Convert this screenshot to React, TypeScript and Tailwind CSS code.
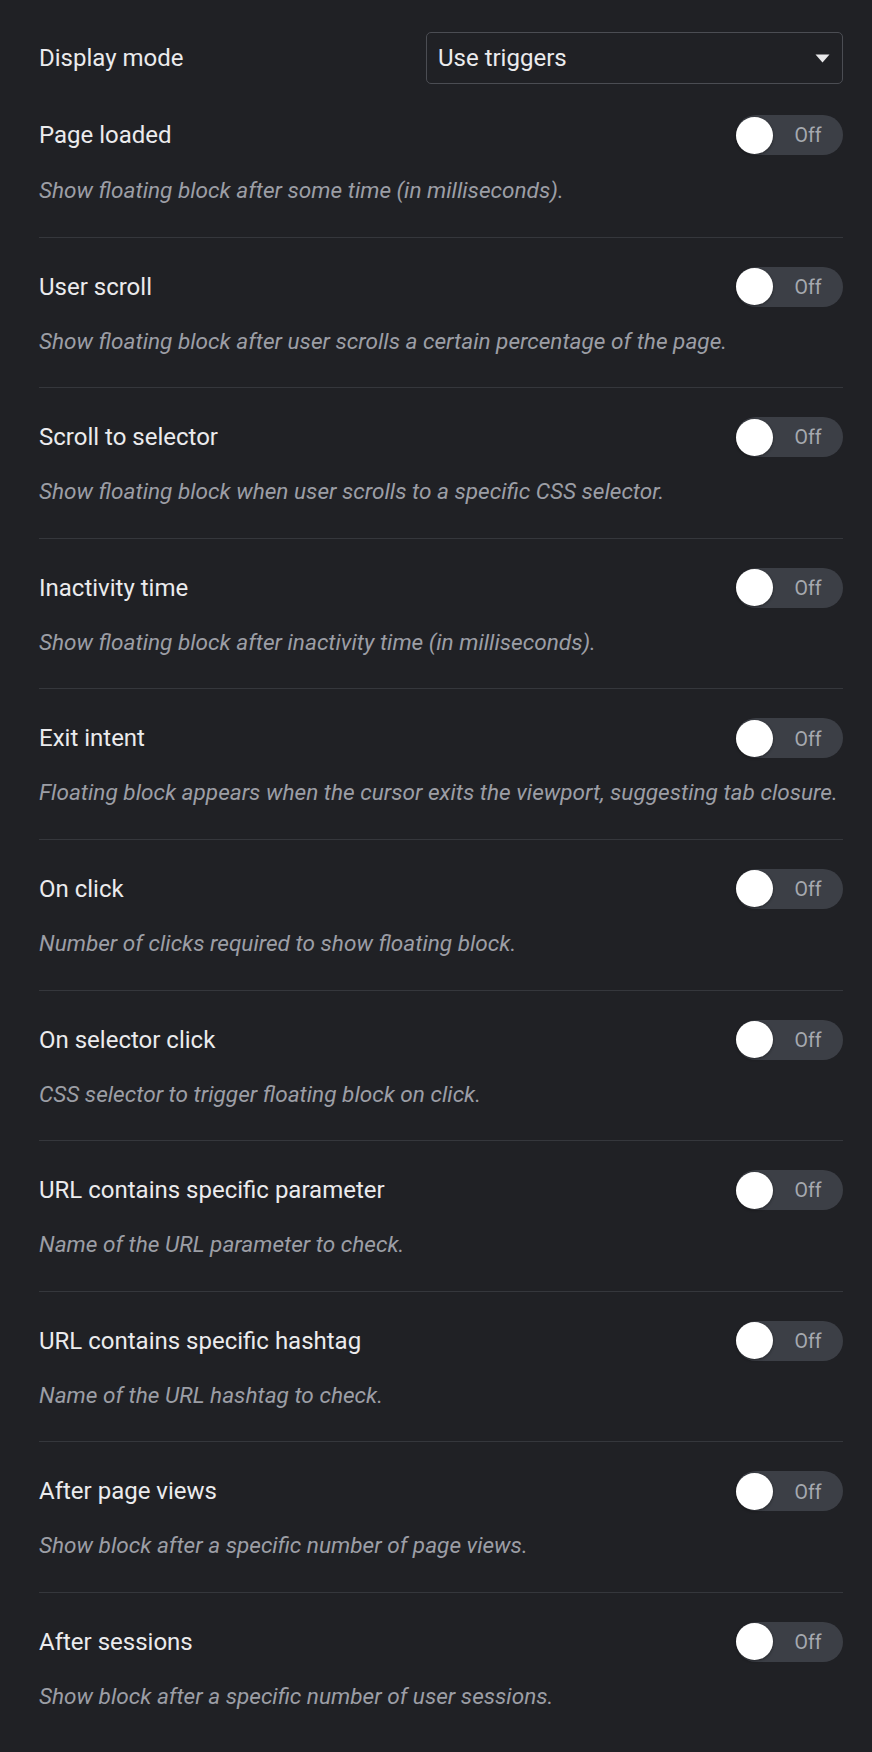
import React from "react";

const triggers: { label: string; desc: string }[] = [
  { label: "Page loaded", desc: "Show floating block after some time (in milliseconds)." },
  { label: "User scroll", desc: "Show floating block after user scrolls a certain percentage of the page." },
  { label: "Scroll to selector", desc: "Show floating block when user scrolls to a specific CSS selector." },
  { label: "Inactivity time", desc: "Show floating block after inactivity time (in milliseconds)." },
  { label: "Exit intent", desc: "Floating block appears when the cursor exits the viewport, suggesting tab closure." },
  { label: "On click", desc: "Number of clicks required to show floating block." },
  { label: "On selector click", desc: "CSS selector to trigger floating block on click." },
  { label: "URL contains specific parameter", desc: "Name of the URL parameter to check." },
  { label: "URL contains specific hashtag", desc: "Name of the URL hashtag to check." },
  { label: "After page views", desc: "Show block after a specific number of page views." },
  { label: "After sessions", desc: "Show block after a specific number of user sessions." },
];

function Toggle() {
  return (
    <div className="flex h-[40px] w-[107px] shrink-0 items-center rounded-full bg-[#3c3f46]">
      <div className="h-[37px] w-[37px] shrink-0 rounded-full bg-white shadow-[0_1px_3px_rgba(0,0,0,0.4)]" />
      <div className="flex-1 pt-[2px] text-center text-[19.5px] leading-none text-[#a6a9b0]">Off</div>
    </div>
  );
}

export default function App() {
  return (
    <div
      className="min-h-[1752px] w-full bg-[#202125] pl-[39px] pr-[29px] pt-[32px] pb-[8px] text-[#ebebed]"
      style={{ fontFamily: "Roboto, 'Noto Sans', Arial, sans-serif" }}
    >
      <div className="flex h-[52px] items-center justify-between">
        <div className="text-[24px] leading-none">Display mode</div>
        <div className="flex h-[52px] w-[417px] items-center justify-between rounded-[5px] border border-[#4b4d53] pl-[11px] pr-[12px]">
          <span className="text-[24px] leading-none">Use triggers</span>
          <svg width="15" height="9" viewBox="0 0 15 9" className="text-[#e8e8ea]">
            <path d="M0.5 0.5 L14.5 0.5 L7.5 8.5 Z" fill="currentColor" />
          </svg>
        </div>
      </div>
      <div className="flex flex-col">
        {triggers.map((t, i) => (
          <div
            key={t.label}
            className={
              i === 0
                ? "pt-[31px] pb-[31.6px]"
                : "border-t border-[#35373c] pt-[29px] pb-[31.6px]"
            }
          >
            <div className="flex h-[40px] items-center justify-between">
              <div className="text-[24px] leading-none">{t.label}</div>
              <Toggle />
            </div>
            <div className={i === 0 ? "mt-[22px] text-[22.6px] italic leading-[28px] text-[#9c9ea5]" : "mt-[21px] text-[22.6px] italic leading-[28px] text-[#9c9ea5]"}>
              {t.desc}
            </div>
          </div>
        ))}
      </div>
    </div>
  );
}
